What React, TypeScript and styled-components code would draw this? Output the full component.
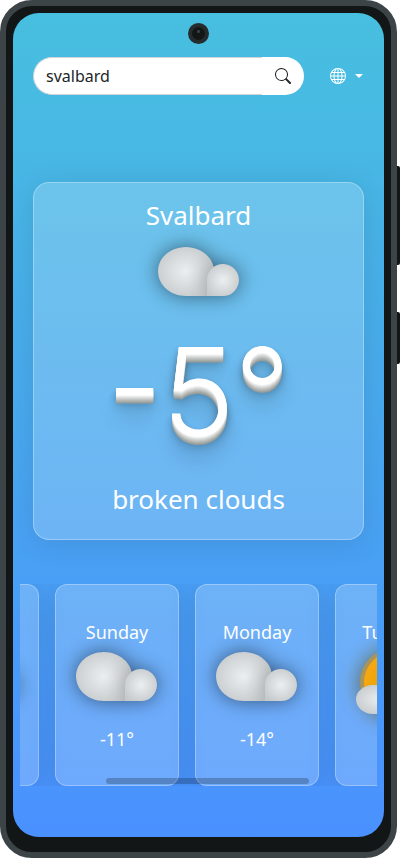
import React, { useLayoutEffect, useRef } from 'react';
import styled, { createGlobalStyle, css } from 'styled-components';
import { BsGlobe, BsSearch } from 'react-icons/bs';

const GlobalStyle = createGlobalStyle`
  *, *::before, *::after { box-sizing: border-box; }
  html, body { margin: 0; background: #fff; }
  body { font-family: "Noto Sans", sans-serif; color: #fff; overflow: hidden; }
  h1, h2, p { margin: 0; font-weight: 400; }
`;

const glass = css`
  background: rgba(255, 255, 255, 0.2);
  border: 1px solid rgba(255, 255, 255, 0.3);
  box-shadow: 0 4px 30px rgba(0, 0, 0, 0.1);
`;

const Phone = styled.div`
  position: relative;
  min-height: 100vh;
  margin-right: 3px;
  padding: 7px 7px 15px;
  display: flex;
  background: #121616;
  border: 6px solid #3c4447;
  border-radius: 32px;
`;

const SideButton = styled.span<{ $top: number; $height: number }>`
  position: absolute;
  right: -9px;
  top: ${(p) => p.$top}px;
  width: 3px;
  height: ${(p) => p.$height}px;
  background: #121616;
  border-radius: 0 2px 2px 0;
`;

const Screen = styled.main`
  flex: 1;
  min-width: 0;
  display: flex;
  flex-direction: column;
  padding-top: 10px;
  background: linear-gradient(180deg, #47bfdf, #4a91ff);
  border-radius: 26px;
  overflow: hidden;
`;

const Camera = styled.div`
  align-self: center;
  width: 21px;
  height: 21px;
  border: 4px solid #262b2d;
  border-radius: 50%;
  background: radial-gradient(circle at 50% 35%, #3a4042 0 1px, #121616 2px);
`;

const TopBar = styled.header`
  display: flex;
  align-items: center;
  gap: 24px;
  padding: 13px 20px 0;
`;

const SearchForm = styled.form`
  flex: 1;
  min-width: 0;
  display: flex;
  height: 38px;
`;

const SearchInput = styled.input`
  flex: 1;
  min-width: 0;
  padding: 0 12px;
  border: 1px solid #ced4da;
  border-right: 0;
  border-radius: 19px 0 0 19px;
  background: #fff;
  color: #212529;
  font: 16px "Noto Sans", sans-serif;
  outline: none;
`;

const SearchButton = styled.button`
  display: grid;
  place-items: center;
  width: 42px;
  padding: 0;
  border: 0;
  border-radius: 0 19px 19px 0;
  background: #fff;
  color: #212529;
`;

const LanguageButton = styled.button`
  display: flex;
  align-items: center;
  gap: 9px;
  padding: 0 1px 0 2px;
  border: 0;
  background: none;
  color: #fff;
`;

const Caret = styled.span`
  border: 4px solid transparent;
  border-top-color: #fff;
  border-bottom: 0;
`;

const CurrentCard = styled.section`
  ${glass}
  display: flex;
  flex-direction: column;
  align-items: center;
  margin: 87px 20px 44px;
  padding: 14px 12px 22px;
  border-radius: 16px;
`;

const City = styled.h1`
  font-size: 26px;
  line-height: 36px;
`;

const Temperature = styled.p`
  margin-top: 16px;
  font-family: Inter, sans-serif;
  font-size: 122px;
  font-weight: 350;
  line-height: 160px;
  text-shadow: 0 1px 0 #f0f2f1, 0 2px 0 #e2e4e3, 0 3px 0 #d4d7d5,
    0 4px 0 #c7cac8, 0 5px 0 #babebc, 0 6px 0 #adb2af, 0 7px 0 #a1a6a3,
    0 8px 0 #969c99, 0 4px 6px rgba(0, 0, 0, 0.25),
    0 10px 10px rgba(0, 0, 0, 0.25), 0 20px 20px rgba(0, 0, 0, 0.2);
`;

const Description = styled.p`
  margin-top: 9px;
  font-size: 26px;
  line-height: 36px;
`;

const Forecast = styled.section`
  position: relative;
  margin: 0 7px;
`;

const ForecastTrack = styled.div`
  display: flex;
  gap: 16px;
  overflow-x: auto;
  scrollbar-width: none;
`;

const ScrollThumb = styled.span`
  position: absolute;
  left: 24%;
  width: 57%;
  bottom: 2px;
  height: 6px;
  border-radius: 3px;
  background: rgba(0, 0, 0, 0.22);
`;

const DayCard = styled.article`
  ${glass}
  flex: 0 0 124px;
  height: 202px;
  display: flex;
  flex-direction: column;
  align-items: center;
  padding-top: 34px;
  border-radius: 12px;
`;

const DayName = styled.h2`
  font-size: 18px;
  line-height: 26px;
`;

const DayTemperature = styled.p`
  margin-top: 25px;
  font-size: 18px;
  line-height: 26px;
`;

const Icon = styled.svg<{ $gap: number }>`
  display: block;
  flex: none;
  overflow: visible;
  margin-top: ${(p) => p.$gap}px;
`;

type Sky = 'clouds' | 'sun';

function WeatherIcon({ id, sky, gap }: { id: string; sky: Sky; gap: number }) {
  const grad = `${id}-grad`;
  const sun = `${id}-sun`;
  const blur = `${id}-blur`;
  const clip = `${id}-clip`;
  const body = 'M28 0C43 0 56 11 56 24V49H28C12 49 0 38 0 24C0 11 12 0 28 0Z';
  return (
    <Icon width="82" height="49" viewBox="0 0 82 49" $gap={gap} aria-hidden="true">
      <defs>
        <radialGradient id={grad} cx="50%" cy="50%" r="60%">
          <stop offset="0" stopColor="#eceff0" />
          <stop offset="1" stopColor="#c5c9cb" />
        </radialGradient>
        <radialGradient id={sun} cx="50%" cy="50%" r="50%">
          <stop offset="0" stopColor="#e0a000" />
          <stop offset="1" stopColor="#f7a812" />
        </radialGradient>
        <filter id={blur} x="-100%" y="-100%" width="300%" height="300%">
          <feGaussianBlur stdDeviation="10" />
        </filter>
        <clipPath id={clip}>
          <path d={body} />
        </clipPath>
      </defs>
      {sky === 'clouds' ? (
        <>
          <g filter={`url(#${blur})`} opacity="0.5">
            <path d={body} />
            <circle cx="65" cy="33" r="16" />
          </g>
          <path d={body} fill={`url(#${grad})`} />
          <g clipPath={`url(#${clip})`}>
            <circle cx="65" cy="33" r="20" opacity="0.2" filter={`url(#${blur})`} />
          </g>
          <path d="M49 49V32a16 16 0 1 1 16 17Z" fill={`url(#${grad})`} />
        </>
      ) : (
        <>
          <circle cx="38" cy="32" r="36" fill="#5c4a10" opacity="0.6" filter={`url(#${blur})`} />
          <circle cx="38" cy="30" r="34" fill="#aa9556" />
          <circle cx="38" cy="30" r="30" fill={`url(#${sun})`} />
          <path d="M17 33H50V62H17C7 62 0 55 0 47C0 40 7 33 17 33Z" fill={`url(#${grad})`} />
        </>
      )}
    </Icon>
  );
}

const days: { name: string; temperature: string; sky: Sky }[] = [
  { name: 'Saturday', temperature: '-8°', sky: 'clouds' },
  { name: 'Sunday', temperature: '-11°', sky: 'clouds' },
  { name: 'Monday', temperature: '-14°', sky: 'clouds' },
  { name: 'Tuesday', temperature: '-12°', sky: 'sun' },
];

export default function App() {
  const track = useRef<HTMLDivElement>(null);

  useLayoutEffect(() => {
    if (track.current) track.current.scrollLeft = 105;
  }, []);

  return (
    <>
      <GlobalStyle />
      <Phone>
        <SideButton $top={160} $height={99} />
        <SideButton $top={306} $height={52} />
        <Screen>
          <Camera />
          <TopBar>
            <SearchForm onSubmit={(e) => e.preventDefault()}>
              <SearchInput type="text" defaultValue="svalbard" aria-label="City" />
              <SearchButton type="submit" aria-label="Search">
                <BsSearch size={16} />
              </SearchButton>
            </SearchForm>
            <LanguageButton type="button" aria-label="Language">
              <BsGlobe size={16} />
              <Caret />
            </LanguageButton>
          </TopBar>
          <CurrentCard>
            <City>Svalbard</City>
            <WeatherIcon id="current" sky="clouds" gap={14} />
            <Temperature>-5°</Temperature>
            <Description>broken clouds</Description>
          </CurrentCard>
          <Forecast aria-label="Forecast">
            <ForecastTrack ref={track}>
              {days.map((day) => (
                <DayCard key={day.name}>
                  <DayName>{day.name}</DayName>
                  <WeatherIcon id={day.name} sky={day.sky} gap={7} />
                  <DayTemperature>{day.temperature}</DayTemperature>
                </DayCard>
              ))}
            </ForecastTrack>
            <ScrollThumb />
          </Forecast>
        </Screen>
      </Phone>
    </>
  );
}
